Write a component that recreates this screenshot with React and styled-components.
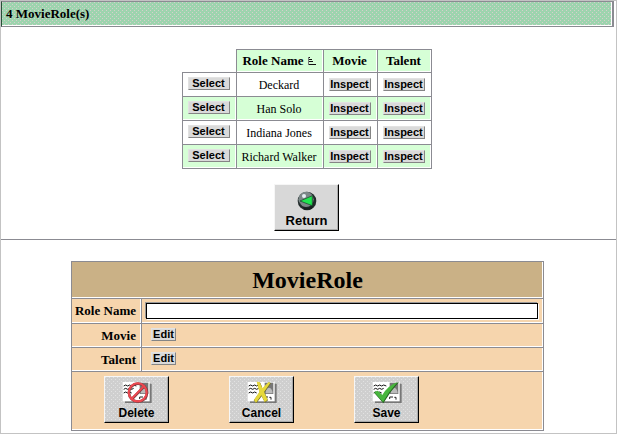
import React from "react";
import styled, { createGlobalStyle } from "styled-components";

const Global = createGlobalStyle`
  *, *::before, *::after { box-sizing: border-box; }
  body { margin: 0; background: #fff; color: #000; font: 13px "Liberation Serif", serif; }
`;

const LINE = "#8b8b92";

const lattice = (color, period, shift = 0) =>
  `conic-gradient(from 270deg at 1px 1px, ${color} 90deg, transparent 0) ${shift}px ${shift}px / ${period}px ${period}px`;

const dots = (color, period) => `${lattice(color, period)}, ${lattice(color, period, period / 2)}`;

const Page = styled.main`
  min-height: 100vh;
  border: 1px solid #c3c3c3;
  padding: 0 0 2px;
`;

const Banner = styled.h1`
  margin: 0 2px 0 0;
  padding: 0 4px;
  height: 26px;
  font-size: 13px;
  line-height: 24px;
  border: 1px solid ${LINE};
  border-right-width: 2px;
  border-left-color: #285038;
  box-shadow: inset -1px -1px #fff;
  background: ${dots("#d4d0cc", 4)}, #9dd4ae;
`;

const Results = styled.section`
  display: flex;
  flex-direction: column;
  align-items: center;
  gap: 15px;
  padding: 22px 4px 8px 0;
  border-bottom: 1px solid ${LINE};
`;

const Grid = styled.table`
  border-collapse: collapse;
  table-layout: fixed;
  width: 250px;
`;

const Col = styled.col`
  width: ${(p) => p.$w}px;
`;

const Cell = styled.td`
  height: 24px;
  padding: 0 1px 0 0;
  border: 1px solid ${LINE};
  text-align: center;
  vertical-align: ${(p) => (p.$top ? "top" : "middle")};
  font-size: 12px;
  line-height: 16px;
  white-space: nowrap;
  background: ${(p) => (p.$tint ? "#d6ffd6" : "#fff")};
  box-shadow: inset -1px -1px #fff;
`;

const HeadCell = styled(Cell)`
  height: 23px;
  font-size: 13px;
  font-weight: bold;
`;

const Corner = styled.td`
  border: 0;
`;

const SortIcon = styled.svg`
  width: 9px;
  height: 8px;
  margin-left: 3px;
`;

const SmallButton = styled.button`
  display: block;
  width: ${(p) => (p.$narrow ? 25 : 42)}px;
  height: 13px;
  margin: ${(p) => p.$margin};
  padding: 0;
  border: 1px solid;
  border-color: #e2e2e2 #858585 #858585 #e2e2e2;
  background: #dadada;
  color: #000;
  font: bold 11px/11px "Liberation Sans", sans-serif;
`;

const BigButton = styled.button`
  display: flex;
  flex-direction: column;
  align-items: center;
  justify-content: flex-end;
  width: 65px;
  height: 47px;
  padding: 0 0 1px;
  border: 1px solid;
  border-color: #f6f6f6 #000 #000 #f6f6f6;
  box-shadow: inset -1px -1px #aaa;
  background: ${(p) => (p.$plain ? "#d8d8d8" : `${dots("#e2e2e2", 4)}, #cfcfcf`)};
  color: #000;
  font: bold ${(p) => (p.$plain ? 13 : 12)}px/16px "Liberation Sans", sans-serif;
`;

const Globe = styled.svg`
  width: 20px;
  height: 20px;
  margin-bottom: 2px;
`;

const CardIcon = styled.svg`
  width: 32px;
  height: 24px;
`;

const Editor = styled.form`
  padding: 21px 72px 0 70px;
`;

const FormTable = styled.table`
  width: 100%;
  border-collapse: collapse;
  table-layout: fixed;
`;

const Title = styled.th`
  height: 37px;
  padding: 0;
  border: 1px solid ${LINE};
  font-size: 24px;
  line-height: 28px;
  box-shadow: inset -1px -1px #fff;
  background: ${lattice("#cddc90", 2)}, #c9a382;
`;

const Label = styled.th`
  height: ${(p) => (p.$tall ? 25 : 24)}px;
  padding: 0 5px 0 0;
  border: 1px solid ${LINE};
  text-align: right;
  white-space: nowrap;
  line-height: 16px;
  box-shadow: inset -1px -1px #fff;
  background: #f6d5ad;
`;

const Field = styled.td`
  padding: 0 5px 0 4px;
  border: 1px solid ${LINE};
  vertical-align: ${(p) => (p.$top ? "top" : "middle")};
  box-shadow: inset -1px -1px #fff;
  background: #f6d5ad;
`;

const TextInput = styled.input`
  display: block;
  width: 100%;
  height: 16px;
  padding: 0 3px;
  border: 1px solid #000;
  border-radius: 0;
  outline: 0;
  background: #fff;
  box-shadow: 1px 1px #fff, -1px -1px #999;
  font: 12px "Liberation Serif", serif;
`;

const Actions = styled.td`
  height: 59px;
  padding: 4px 0 7px 32px;
  border: 1px solid ${LINE};
  vertical-align: top;
  box-shadow: inset -1px -1px #fff;
  background: #f6d5ad;
`;

const ActionRow = styled.div`
  display: flex;
  gap: 60px;
`;

const ROLES = ["Deckard", "Han Solo", "Indiana Jones", "Richard Walker"];

function Card({ children }) {
  return (
    <CardIcon viewBox="0 0 96 72" aria-hidden="true">
      <path d="M12 8H92V66H12Z" fill="#777" />
      <path d="M5 3H86V61H5Z" fill="#fff" />
      <path d="M56 5H82V39H56Z" fill="#777" />
      <path d="M59 37Q59 21 69 20Q79 22 80 37Z" fill="#bbb" />
      <path
        d="M8 15l6-3 6 3 6-3 6 3 6-3 8 3M8 25l6-3 6 3 6-3 6 3 6-3M8 36l6-3 6 3 6-3 6 3"
        fill="none"
        stroke="#111"
        strokeWidth="3"
      />
      <path d="M56 54V48H66M70 49H75V56" fill="none" stroke="#222" strokeWidth="3" />
      {children}
    </CardIcon>
  );
}

function DeleteIcon() {
  return (
    <Card>
      <circle cx="51" cy="35" r="27" fill="none" stroke="#853b40" strokeWidth="8" />
      <path d="M33 54L69 17" stroke="#853b40" strokeWidth="8" />
      <circle cx="50" cy="34" r="27" fill="none" stroke="#ee4850" strokeWidth="6" />
      <path d="M32 53L68 16" stroke="#ee4850" strokeWidth="6" />
    </Card>
  );
}

function CancelIcon() {
  return (
    <Card>
      <path d="M34 4L43 5L50 24L68 4L75 7L56 34L66 58L57 65L47 46L31 67L23 58L41 34Z" fill="#706c2b" />
      <path d="M32 2L41 3L49 22L68 3L73 6L54 33L65 56L56 63L46 43L30 65L24 57L40 33Z" fill="#e6d83a" />
    </Card>
  );
}

function SaveIcon() {
  return (
    <Card>
      <path d="M10 36L21 31L35 45Q52 15 84 3Q56 33 37 67Z" fill="#266522" />
      <path d="M9 33L20 29L34 42Q51 13 80 3Q54 31 36 63Z" fill="#48b63e" />
    </Card>
  );
}

function ReturnIcon() {
  return (
    <Globe viewBox="0 0 60 60" aria-hidden="true">
      <circle cx="30" cy="30" r="28" fill="#222b2b" />
      <circle cx="27" cy="25" r="23" fill="#7c8888" />
      <path d="M5 31Q10 48 30 51Q48 48 53 29L45 54L24 57Z" fill="#182020" />
      <circle cx="21" cy="15" r="6" fill="#e6eef4" />
      <path d="M9 30L46 14V44Z" fill="#20e650" stroke="#173d25" strokeWidth="2" />
    </Globe>
  );
}

export default function App() {
  return (
    <>
      <Global />
      <Page>
        <Banner>4 MovieRole(s)</Banner>
        <Results>
          <Grid>
            <colgroup>
              <Col $w={54} />
              <Col $w={87} />
              <Col $w={54} />
              <Col $w={54} />
            </colgroup>
            <thead>
              <tr>
                <Corner />
                <HeadCell as="th" scope="col" $tint>
                  Role Name
                  <SortIcon viewBox="0 0 9 8" aria-hidden="true">
                    <path d="M1 0.5H3M1 2.5H5M1 4.5H6M1 7.5H9" fill="none" stroke="#111" />
                    <path d="M1.5 0V8" stroke="#777" />
                  </SortIcon>
                </HeadCell>
                <HeadCell as="th" scope="col" $tint>Movie</HeadCell>
                <HeadCell as="th" scope="col" $tint>Talent</HeadCell>
              </tr>
            </thead>
            <tbody>
              {ROLES.map((role, i) => (
                <tr key={role}>
                  <Cell $tint={i % 2 === 1} $top>
                    <SmallButton type="button" $margin="4px auto 0" aria-label={`Select ${role}`}>Select</SmallButton>
                  </Cell>
                  <Cell $tint={i % 2 === 1}>{role}</Cell>
                  <Cell $tint={i % 2 === 1}>
                    <SmallButton type="button" $margin="0 auto" aria-label={`Inspect movie of ${role}`}>Inspect</SmallButton>
                  </Cell>
                  <Cell $tint={i % 2 === 1}>
                    <SmallButton type="button" $margin="0 auto" aria-label={`Inspect talent of ${role}`}>Inspect</SmallButton>
                  </Cell>
                </tr>
              ))}
            </tbody>
          </Grid>
          <BigButton type="button" $plain>
            <ReturnIcon />
            Return
          </BigButton>
        </Results>
        <Editor onSubmit={(e) => e.preventDefault()}>
          <FormTable>
            <colgroup>
              <Col $w={70} />
              <col />
            </colgroup>
            <tbody>
              <tr>
                <Title colSpan={2}>MovieRole</Title>
              </tr>
              <tr>
                <Label scope="row" $tall><label htmlFor="role-name">Role Name</label></Label>
                <Field><TextInput id="role-name" type="text" /></Field>
              </tr>
              <tr>
                <Label scope="row">Movie</Label>
                <Field $top><SmallButton type="button" $narrow $margin="4px 0 0 5px" aria-label="Edit movie">Edit</SmallButton></Field>
              </tr>
              <tr>
                <Label scope="row">Talent</Label>
                <Field $top><SmallButton type="button" $narrow $margin="4px 0 0 5px" aria-label="Edit talent">Edit</SmallButton></Field>
              </tr>
              <tr>
                <Actions colSpan={2}>
                  <ActionRow>
                    <BigButton type="button"><DeleteIcon />Delete</BigButton>
                    <BigButton type="button"><CancelIcon />Cancel</BigButton>
                    <BigButton type="submit"><SaveIcon />Save</BigButton>
                  </ActionRow>
                </Actions>
              </tr>
            </tbody>
          </FormTable>
        </Editor>
      </Page>
    </>
  );
}
